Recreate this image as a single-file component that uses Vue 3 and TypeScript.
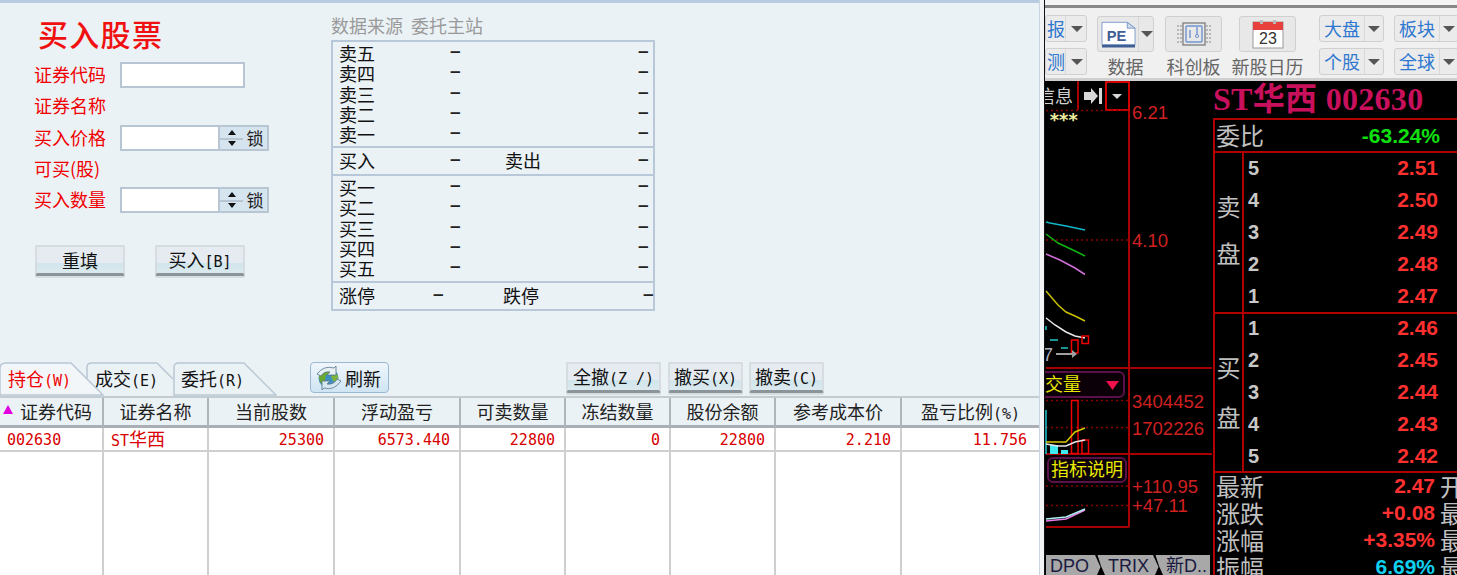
<script setup lang="ts">
const formRows = [
  { label: '证券代码', kind: 'plain' },
  { label: '证券名称', kind: 'none' },
  { label: '买入价格', kind: 'spin' },
  { label: '可买(股)', kind: 'none' },
  { label: '买入数量', kind: 'spin' },
]
const sells = ['卖五', '卖四', '卖三', '卖二', '卖一']
const buys = ['买一', '买二', '买三', '买四', '买五']
const headers = ['证券代码', '证券名称', '当前股数', '浮动盈亏', '可卖数量', '冻结数量', '股份余额', '参考成本价', '盈亏比例']
const cells = ['002630', 'ST华西', '25300', '6573.440', '22800', '0', '22800', '2.210', '11.756']
const asks = [['5', '2.51'], ['4', '2.50'], ['3', '2.49'], ['2', '2.48'], ['1', '2.47']]
const bids = [['1', '2.46'], ['2', '2.45'], ['3', '2.44'], ['4', '2.43'], ['5', '2.42']]
const stats = [
  { k: '最新', v: '2.47', c: 'red', e: '开' },
  { k: '涨跌', v: '+0.08', c: 'red', e: '最' },
  { k: '涨幅', v: '+3.35%', c: 'red', e: '最' },
  { k: '振幅', v: '6.69%', c: 'cyan', e: '最' },
]
</script>

<template>
  <div class="app">
    <section class="left">
      <div class="strip"></div>
      <div class="upper">
        <div class="form">
          <h1 class="title">买入股票</h1>
          <div v-for="r in formRows" :key="r.label" class="frow">
            <span class="flabel">{{ r.label }}</span>
            <span v-if="r.kind === 'plain'" class="input wide"></span>
            <template v-if="r.kind === 'spin'">
              <span class="input"></span>
              <span class="spin"><i class="up"></i><i class="down"></i></span>
              <span class="lock">锁</span>
            </template>
          </div>
          <div class="fbtns">
            <button class="btn b90">重填</button>
            <button class="btn b90">买入<span class="m">[B]</span></button>
          </div>
        </div>
        <div class="quote">
          <div class="qtitle">数据来源&nbsp;&nbsp;委托主站</div>
          <div class="qbox">
            <div class="qsec s1">
              <div v-for="s in sells" :key="s" class="qrow"><span>{{ s }}</span><span class="d">–</span><span></span><span class="d">–</span></div>
            </div>
            <div class="qmid qrow"><span>买入</span><span class="d">–</span><span>卖出</span><span class="d">–</span></div>
            <div class="qsec s2">
              <div v-for="s in buys" :key="s" class="qrow"><span>{{ s }}</span><span class="d">–</span><span></span><span class="d">–</span></div>
            </div>
            <div class="qlast qrow"><span>涨停</span><span class="d">–</span><span>跌停</span><span class="d">–</span></div>
          </div>
        </div>
      </div>
      <div class="bar">
        <div class="tabs">
          <div class="tab t1">
            <svg class="tabshape" width="104" height="34" viewBox="0 0 104 34"><path d="M0 33V6Q0 1 6 1H71L103 33Z" fill="#f2f6f9" stroke="#b9c7d4" stroke-width="1.5"/></svg>
            <span class="tabtext active">持仓<span class="m">(W)</span></span>
          </div>
          <div class="tab t2">
            <svg class="tabshape" width="87" height="34" viewBox="0 0 87 34"><path d="M1 17V5Q1 1 6 1H71L87 17" fill="#ebf2f6" stroke="#b9c7d4" stroke-width="1.5"/></svg>
            <span class="tabtext">成交<span class="m">(E)</span></span>
          </div>
          <div class="tab t3">
            <svg class="tabshape" width="104" height="34" viewBox="0 0 104 34"><path d="M1 33V5Q1 1 6 1H71L103 33Z" fill="#ebf2f6" stroke="#b9c7d4" stroke-width="1.5"/></svg>
            <span class="tabtext">委托<span class="m">(R)</span></span>
          </div>
        </div>
        <button class="refresh">
          <svg width="26" height="24" viewBox="0 0 26 24">
            <circle cx="12.500" cy="12" r="10" fill="#3f8fc0"/>
            <path d="M5 5Q11 1 17 4L15 9L10 9L9 14L12 18L8 20Q3 16 3 11Z" fill="#6aa832"/>
            <path d="M15 10L21 8Q23 12 21 16L17 15Z" fill="#7cb53a"/>
            <path d="M1 8Q8 -1 18 2L20 0V9H11L14 6Q8 5 5 10Z" fill="#e8f0f4" stroke="#55758c" stroke-width=".8"/>
            <path d="M25 15Q18 25 8 22L6 24V15H14L11 18Q18 19 21 13Z" fill="#d8e8f0" stroke="#55758c" stroke-width=".8"/>
          </svg>
          <span>刷新</span>
        </button>
        <div class="acts">
          <button class="btn a1">全撤<span class="m">(Z /)</span></button>
          <button class="btn a2">撤买<span class="m">(X)</span></button>
          <button class="btn a3">撤卖<span class="m">(C)</span></button>
        </div>
      </div>
      <div class="table">
        <div v-for="(h, i) in headers" :key="h" class="th">
          <i v-if="i === 0" class="sort"></i>{{ h }}<span v-if="i === 8" class="m">(%)</span>
        </div>
        <div v-for="(c, i) in cells" :key="i" class="td" :class="{ l: i < 2 }">
          <template v-if="i === 1">ST<span class="hz">华西</span></template>
          <template v-else>{{ c }}</template>
        </div>
        <div v-for="i in 9" :key="'f' + i" class="tf"></div>
      </div>
    </section>

    <div class="gutter"></div>

    <section class="right">
      <header class="tool">
        <div class="tcol clip">
          <div class="split"><span>报</span><i class="ar"></i></div>
          <div class="split"><span>测</span><i class="ar"></i></div>
        </div>
        <div class="big first">
          <div class="bigbtn pe">
            <svg width="36" height="30" viewBox="0 0 36 30">
              <path d="M1 3H27L35 9V26H1Z" fill="#fdfdff" stroke="#7d9cc8"/>
              <path d="M27 3V9H35Z" fill="#cfdcee" stroke="#7d9cc8"/>
              <path d="M1 26H35V29H1Z" fill="#3f5f94"/>
              <text x="6" y="22" class="petext">PE</text>
            </svg>
            <span class="sep"></span><i class="ar"></i>
          </div>
          <label>数据</label>
        </div>
        <div class="big chip">
          <div class="bigbtn">
            <svg width="36" height="26" viewBox="0 0 36 26" fill="none">
              <path d="M1 5H6M1 9H6M1 13H6M1 17H6M1 21H6M30 5H35M30 9H35M30 13H35M30 17H35M30 21H35" stroke="#8a8a8a" stroke-dasharray="2 1"/>
              <rect x="7" y="2" width="22" height="22" fill="none" stroke="#8a8a8a" stroke-width="1.5"/>
              <rect x="10" y="5" width="16" height="16" rx="1" stroke="#6f95d0" stroke-width="1.4"/>
              <path d="M14 9V17M21 6V13" stroke="#6f95d0" stroke-width="1.4"/>
              <circle cx="21" cy="15" r="1.6" stroke="#6f95d0"/>
            </svg>
          </div>
          <label>科创板</label>
        </div>
        <div class="big cal">
          <div class="bigbtn">
            <svg width="32" height="30" viewBox="0 0 32 30">
              <rect x="1" y="3" width="30" height="26" fill="#fff" stroke="#9a9a9a"/>
              <rect x="1" y="3" width="30" height="8" fill="#e8403c"/>
              <rect x="8" y="1" width="3" height="4" fill="#b8b8b8"/><rect x="21" y="1" width="3" height="4" fill="#b8b8b8"/>
              <text x="16" y="25" text-anchor="middle" class="caltext">23</text>
            </svg>
          </div>
          <label>新股日历</label>
        </div>
        <div class="divider"></div>
        <div class="tcol">
          <div class="split"><span>大盘</span><i class="ar"></i></div>
          <div class="split"><span>个股</span><i class="ar"></i></div>
        </div>
        <div class="tcol">
          <div class="split"><span>板块</span><i class="ar"></i></div>
          <div class="split"><span>全球</span><i class="ar"></i></div>
        </div>
      </header>

      <div class="dark">
        <div class="chart">
          <svg width="167" height="494" viewBox="1045 81 167 494" class="cs">
            <g stroke="#a80000" stroke-width="2" fill="none">
              <path d="M1129 81V527M1046 527H1129M1046 368H1212M1046 454H1212"/>
              <path d="M1078 81V110M1106 81V110"/>
              <path d="M1106 82H1129V110H1106Z" stroke="#d00000"/>
            </g>
            <g stroke="#8a0000" stroke-width="1.5" stroke-dasharray="2 3" fill="none">
              <path d="M1046 110.500H1129M1046 240H1129M1046 400.500H1129M1046 427.500H1129M1046 486H1129M1046 505.500H1129"/>
            </g>
            <text x="1037" y="103" class="cjk g">信息</text>
            <path d="M1084 92H1091V88L1098 96L1091 104V100H1084ZM1099 88H1102V104H1099Z" fill="#d8d8d8"/>
            <path d="M1112 94H1122L1117 99Z" fill="#d8d8d8"/>
            <text x="1132" y="119" class="ax">6.21</text>
            <text x="1132" y="247" class="ax">4.10</text>
            <text x="1132" y="408" class="ax">3404452</text>
            <text x="1132" y="435" class="ax">1702226</text>
            <text x="1132" y="493" class="ax">+110.95</text>
            <text x="1132" y="512" class="ax">+47.11</text>
            <text x="1049" y="126" class="star">***</text>
            <g fill="none" stroke-width="1.5">
              <path d="M1046 222L1050 223L1066 226L1085 230" stroke="#12b5c9"/>
              <path d="M1046 234L1058 243L1075 251L1085 256" stroke="#10b510"/>
              <path d="M1046 254L1060 260L1075 268L1085 274.500" stroke="#d070d8"/>
              <path d="M1046 291L1058 305L1066 312L1075 316L1085 321" stroke="#c8c000"/>
              <path d="M1046 318L1055 325L1066 332L1075 336L1085 338" stroke="#e8e8e8"/>
              <path d="M1050 340H1058M1061 348H1068M1046 326V330" stroke="#20c8c8"/>
              <rect x="1082" y="336" width="6.500" height="7.500" stroke="#f00000"/>
              <rect x="1071.500" y="340" width="6.500" height="13" stroke="#f00000"/>
              <path d="M1056 354H1072" stroke="#a0a0a0" stroke-width="2"/>
              <rect x="1071.500" y="400.500" width="6.500" height="53" stroke="#f00000"/>
              <rect x="1082" y="440" width="6.500" height="13.500" stroke="#f00000"/>
              <path d="M1046 410V454" stroke="#20c8d0"/>
            </g>
            <path d="M1072 350L1077 354L1072 358Z" fill="#a0a0a0"/>
            <text x="1043" y="361" class="seven">7</text>
            <rect x="1050" y="445" width="8" height="9" fill="#40e8f0"/>
            <rect x="1061" y="450" width="7" height="4" fill="#40e8f0"/>
            <g fill="none" stroke-width="1.5">
              <path d="M1046 442H1066L1075 432L1085 428" stroke="#d8c800"/>
              <path d="M1046 444L1058 446H1066L1075 442L1085 440" stroke="#e8e8e8"/>
              <path d="M1046 521L1066 519L1085 510" stroke="#e880e8"/>
              <path d="M1046 519L1066 517L1085 509" stroke="#b0f0f0"/>
            </g>
            <rect x="1030" y="372" width="94" height="25" rx="5" fill="#0c0008" stroke="#5a1048" stroke-width="2"/>
            <text x="1045" y="391" class="cjk y">交量</text>
            <path d="M1106 381H1119L1112.500 390Z" fill="#f0104c"/>
            <rect x="1048" y="458" width="78" height="24" rx="5" fill="#0c0008" stroke="#5a1048" stroke-width="2"/>
            <text x="1051" y="476" class="cjk y">指标说明</text>
          </svg>
          <div class="bt">
            <span class="btab">DPO</span><span class="btab">TRIX</span><span class="btab">新D..</span>
          </div>
        </div>

        <aside class="panel">
          <div class="name">ST华西 002630</div>
          <div class="pbox">
            <div class="wb"><span class="kl">委比</span><b class="green">-63.24%</b></div>
            <div class="book b1">
              <div class="side"><span>卖</span><span>盘</span></div>
              <div class="lvls">
                <div v-for="a in asks" :key="a[1]" class="lvl"><b>{{ a[0] }}</b><b class="px">{{ a[1] }}</b></div>
              </div>
            </div>
            <div class="book b2">
              <div class="side"><span>买</span><span>盘</span></div>
              <div class="lvls">
                <div v-for="a in bids" :key="a[1]" class="lvl"><b>{{ a[0] }}</b><b class="px">{{ a[1] }}</b></div>
              </div>
            </div>
            <div class="stats">
              <div v-for="s in stats" :key="s.k" class="st">
                <span class="kl">{{ s.k }}</span>
                <b :class="s.c">{{ s.v }}</b>
                <span class="kl ex">{{ s.e }}</span>
              </div>
            </div>
          </div>
        </aside>
      </div>
    </section>
  </div>
</template>

<style>
html, body { margin: 0; background: #000; overflow: hidden; }
</style>

<style scoped>
* { box-sizing: border-box; }
.app {
  width: 1457px; height: 575px; display: flex; overflow: hidden;
  font-family: "Noto Sans CJK SC", sans-serif; font-size: 18px; color: #111;
}
.m { font-family: "DejaVu Sans Mono", monospace; font-size: 15px; }
.left { width: 1039px; flex: none; display: flex; flex-direction: column; background: #ebf2f6; }
.strip { height: 3px; background: #b9cbe0; flex: none; }
.upper { height: 359px; flex: none; display: flex; }
.form { width: 331px; flex: none; padding-left: 34px; }
.title { margin: 0; height: 56.5px; padding: 9px 0 0 4px; font-size: 30px; line-height: 42px; font-weight: 500; color: #f01010; letter-spacing: 1.3px; }
.frow { height: 31.25px; display: flex; align-items: center; color: #f00000; }
.flabel { width: 86px; flex: none; line-height: 24px; padding-bottom: 2px; }
.input { display: block; width: 100px; height: 26px; background: #fff; border: 2px solid #b8c6d4; }
.input.wide { width: 125px; }
.spin { width: 23px; height: 26px; display: flex; flex-direction: column; justify-content: space-between; background: linear-gradient(#d6e4f0 0 11px, #b8c6d4 11px 13px, #d6e4f0 13px); border-top: 2px solid #b8c6d4; border-bottom: 2px solid #b8c6d4; padding: 3px 0; align-items: center; }
.up { width: 0; height: 0; border: 4px solid transparent; border-top: 0; border-bottom: 5px solid #111; }
.down { width: 0; height: 0; border: 4px solid transparent; border-bottom: 0; border-top: 5px solid #111; }
.lock { width: 26px; height: 26px; background: #d6e4f0; border: 2px solid #b8c6d4; border-left: 0; font-size: 17px; line-height: 21px; text-align: center; color: #222; }
.fbtns { display: flex; gap: 30px; margin: 29px 0 0 1px; }
.btn {
  height: 31px; padding: 0; font: inherit; color: #111; line-height: 24px; white-space: nowrap;
  border: 2px solid #d6dcdf; border-bottom: 3px solid #8b9499;
  box-shadow: 0 2px 0 #d6dcdf;
  background: linear-gradient(#e5ebf0 0 60%, #d0e6ec 62%, #dbe9ee 100%);
  border-radius: 2px;
}
.b90 { width: 90px; }
.quote { width: 324px; flex: none; padding-top: 11px; }
.qtitle { color: #9a9a9a; height: 26px; line-height: 22px; white-space: nowrap; }
.qbox { height: 271px; border: 2px solid #b8c8d8; display: flex; flex-direction: column; }
.qsec { display: flex; flex-direction: column; flex: none; }
.s1 { height: 104px; padding-top: 1px; }
.s2 { height: 105px; padding-top: 1px; }
.qrow { height: 20.300px; flex: none; display: grid; grid-template-columns: 111px 55px 133px 11px; padding-left: 6px; line-height: 20px; white-space: nowrap; }
.qmid { height: 30px; line-height: 24px; border-top: 2px solid #b8c8d8; border-bottom: 2px solid #b8c8d8; }
.qlast { flex: 1; line-height: 24px; border-top: 2px solid #b8c8d8; grid-template-columns: 94px 70px 140px 11px; }
.d { font-family: "Liberation Sans", sans-serif; font-size: 19px; font-weight: 700; line-height: 15px; color: #222; }
.qmid .d, .qlast .d { line-height: 21px; }
.bar { height: 34px; flex: none; display: flex; align-items: flex-start; }
.tabs { display: flex; width: 310px; flex: none; height: 34px; }
.tab { position: relative; height: 34px; flex: none; }
.tabshape { position: absolute; left: 0; top: 0; }
.tabtext { position: relative; display: block; line-height: 32px; padding-left: 8px; white-space: nowrap; }
.tabtext.active { color: #f00000; }
.t1 { width: 104px; z-index: 3; }
.t2 { width: 87px; margin-left: -18px; z-index: 1; padding-left: 1px; }
.t3 { width: 104px; margin-left: 0; z-index: 2; }
.refresh {
  width: 79px; height: 31px; padding: 0 0 0 5px; display: flex; align-items: center; gap: 3px; font: inherit; color: #111;
  border: 1px solid #9ab8d2; border-radius: 4px; background: linear-gradient(#f0f6fb, #cfe4f4);
}
.acts { display: flex; margin-left: 177px; }
.a1 { width: 95px; }
.a2 { width: 75px; margin-left: 7px; }
.a3 { width: 75px; margin-left: 6px; }
.table {
  flex: 1; display: grid; grid-template-columns: 104px 105px 126px 126px 105px 105px 105px 126px 1fr;
  grid-template-rows: 30px 24px 1fr;
  background: #fff; border-top: 2px solid #c4ccd2;
}
.th { background: #ebf2f6; border-right: 2px solid #aeb6bc; border-bottom: 3px solid #a9afb4; text-align: center; line-height: 26px; color: #222; white-space: nowrap; position: relative; }
.th:first-child { padding-left: 10px; }
.th:nth-child(9) { border-right: 0; }
.sort { position: absolute; left: 3px; top: 7px; width: 0; height: 0; border: 5px solid transparent; border-top: 0; border-bottom: 9px solid #e000e0; }
.td { font-family: "DejaVu Sans Mono", "Noto Sans CJK SC", monospace; font-size: 15px; color: #d80000; text-align: right; padding-right: 9px; line-height: 24px; border-right: 2px solid #cfcfcf; border-bottom: 2px solid #cfcfcf; white-space: nowrap; }
.td.l { text-align: left; padding-left: 7px; padding-right: 0; }
.hz { font-size: 18px; font-family: "Noto Sans CJK SC", sans-serif; line-height: 20px; }
.td:nth-child(18) { border-right: 0; padding-right: 12px; }
.tf { border-right: 2px solid #cfcfcf; }
.tf:last-child { border-right: 0; }
.gutter { width: 6px; flex: none; background: #f2f4f6; border-left: 1px solid #c8d6e4; border-right: 1px solid #111; }
.right { flex: 1; min-width: 0; display: flex; flex-direction: column; }
.tool { height: 81px; flex: none; background: #f0f0f0; position: relative; display: flex; box-shadow: inset 0 5px 0 #f4f4f4, inset 0 8px 0 #888, inset 0 -3px 0 #cfcfcf; overflow: hidden; padding-top: 15px; }
.tcol { display: flex; flex-direction: column; gap: 6px; width: 65px; flex: none; }
.tcol.clip { width: 42px; }
.tcol.clip .split { width: 42px; }
.tcol.clip .split span { width: 21px; text-align: right; margin-left: -1px; }
.split { height: 27px; width: 65px; border: 1px solid #d0d0d0; border-radius: 3px; background: #ebebeb; display: flex; align-items: center; justify-content: space-between; color: #2f78d0; line-height: 25px; }
.split span { width: 45px; text-align: center; flex: none; border-right: 1px solid #d8d8d8; }
.ar { width: 0; height: 0; border: 6px solid transparent; border-bottom: 0; border-top: 6px solid #555; margin-right: 3px; }
.big { display: flex; flex-direction: column; align-items: center; width: 57px; flex: none; }
.big label { color: #666; font-size: 18px; line-height: 24px; margin-top: 2px; white-space: nowrap; }
.bigbtn { width: 57px; height: 36px; margin-top: 1px; border: 1px solid #d0d0d0; border-radius: 3px; background: #e8e8e8; display: flex; align-items: center; justify-content: center; }
.first { margin-left: 10px; }
.pe { justify-content: flex-start; padding-left: 3px; }
.pe .sep { width: 1px; height: 100%; background: #d8d8d8; margin-left: 2px; }
.pe .ar { margin: 0 0 0 2px; }
.petext { font: 700 15px "Liberation Sans", sans-serif; fill: #3f5f94; }
.caltext { font: 400 16px "Liberation Sans", sans-serif; fill: #333; }
.chip { margin-left: 11px; }
.cal { margin-left: 17px; }
.divider { width: 2px; height: 62px; background: #c8c8c8; margin: 0 14px 0 9px; }
.tcol + .tcol { margin-left: 10px; }
.dark { flex: 1; min-height: 0; background: #000; display: flex; }
.chart { width: 167px; flex: none; position: relative; overflow: hidden; }
.cs { display: block; position: absolute; left: 0; top: 0; }
.cjk { font: 18px "Noto Sans CJK SC", sans-serif; }
.g { fill: #d0d0d0; }
.y { fill: #e8e800; }
.ax { font: 18.500px "Liberation Sans", sans-serif; fill: #d02020; }
.star { font: 700 18px "DejaVu Sans Mono", monospace; fill: #f0f0a0; letter-spacing: -1.500px; }
.seven { font: 18px "Liberation Sans", sans-serif; fill: #b0b0c0; }
.bt { position: absolute; left: 1px; right: 2px; bottom: 0; height: 20px; background: #a8a8a8; display: flex; gap: 10px; color: #1a1a40; font: 18px/22px "Liberation Sans", "Noto Sans CJK SC", sans-serif; }
.btab { width: 49px; padding-left: 4px; white-space: nowrap; position: relative; }
.btab:not(:last-child)::after { content: ""; position: absolute; left: 49px; top: 0; width: 10px; height: 20px; background: #000; clip-path: polygon(0 0, 25% 0, 60% 55%, 100% 100%, 20% 100%, 55% 60%); }
.panel { flex: 1; min-width: 0; display: flex; flex-direction: column; overflow: hidden; }
.name { height: 37px; flex: none; font: 700 32px/37px "Liberation Serif", "Noto Sans CJK SC", serif; letter-spacing: .3px; color: #c8105c; white-space: nowrap; padding-left: 1px; }
.pbox { flex: 1; border-top: 2px solid #b00000; border-left: 2px solid #b00000; min-height: 0; margin-left: 1px; }
.wb { height: 33px; display: flex; align-items: center; justify-content: space-between; padding: 0 17px 0 1px; border-bottom: 2px solid #b00000; }
.kl { color: #c0c0c0; font-size: 24px; line-height: 27px; }
.wb .kl { padding-bottom: 2px; }
.green { color: #10e010; }
.wb b, .st b, .px { font: 700 21px "Liberation Sans", sans-serif; }
.book { display: flex; border-bottom: 2px solid #b00000; }
.b1 { height: 161px; }
.b2 { height: 159px; }
.side { width: 29px; flex: none; border-right: 2px solid #b00000; color: #c0c0c0; font-size: 24px; display: flex; flex-direction: column; align-items: center; justify-content: center; gap: 15px; line-height: 32px; }
.b1 .side { padding-bottom: 7px; }
.b2 .side { gap: 18px; padding-bottom: 2px; }
.lvls { flex: 1; display: flex; flex-direction: column; }
.b2 .lvls { margin-top: -1px; }
.lvl { height: 32px; flex: none; display: flex; justify-content: space-between; align-items: center; padding: 0 19px 2px 4px; color: #c8c8c8; font: 700 20px "Liberation Sans", sans-serif; }
.px { color: #ff3030; }
.stats { margin-top: -1px; }
.st { height: 27px; display: flex; align-items: center; position: relative; padding-left: 1px; white-space: nowrap; }
.st b { margin-left: auto; margin-right: 15px; padding-top: 1px; }
.st .ex { width: 4px; margin-right: 13px; margin-left: -10px; }
.red { color: #ff3030; }
.cyan { color: #10d0f0; }
</style>
